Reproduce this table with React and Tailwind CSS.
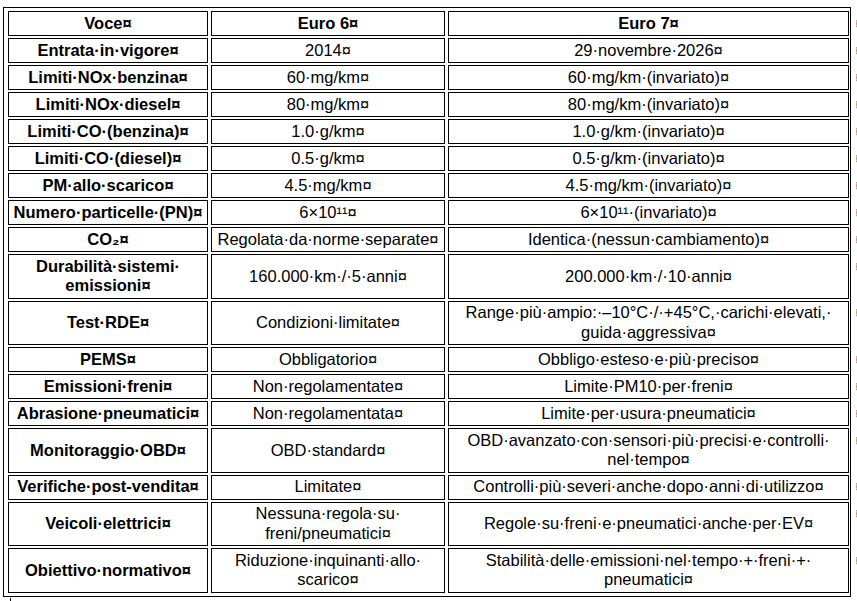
import React from "react";

const rows = [
  [["Voce"], ["Euro\u00a06"], ["Euro\u00a07"]],
  [["Entrata in vigore"], ["2014"], ["29 novembre 2026"]],
  [["Limiti NOx benzina"], ["60 mg/km"], ["60 mg/km (invariato)"]],
  [["Limiti NOx diesel"], ["80 mg/km"], ["80 mg/km (invariato)"]],
  [["Limiti CO (benzina)"], ["1.0 g/km"], ["1.0 g/km (invariato)"]],
  [["Limiti CO (diesel)"], ["0.5 g/km"], ["0.5 g/km (invariato)"]],
  [["PM allo scarico"], ["4.5 mg/km"], ["4.5 mg/km (invariato)"]],
  [["Numero particelle (PN)"], ["6×10¹¹"], ["6×10¹¹ (invariato)"]],
  [["CO₂"], ["Regolata da norme separate"], ["Identica (nessun cambiamento)"]],
  [["Durabilità sistemi ", "emissioni"], ["160.000 km / 5 anni"], ["200.000 km / 10 anni"]],
  [["Test RDE"], ["Condizioni limitate"], ["Range più ampio: –10°C / +45°C, carichi elevati, ", "guida aggressiva"]],
  [["PEMS"], ["Obbligatorio"], ["Obbligo esteso e più preciso"]],
  [["Emissioni freni"], ["Non regolamentate"], ["Limite PM10 per freni"]],
  [["Abrasione pneumatici"], ["Non regolamentata"], ["Limite per usura pneumatici"]],
  [["Monitoraggio OBD"], ["OBD standard"], ["OBD avanzato con sensori più precisi e controlli ", "nel tempo"]],
  [["Verifiche post-vendita"], ["Limitate"], ["Controlli più severi anche dopo anni di utilizzo"]],
  [["Veicoli elettrici"], ["Nessuna regola su ", "freni/pneumatici"], ["Regole su freni e pneumatici anche per EV"]],
  [["Obiettivo normativo"], ["Riduzione inquinanti allo ", "scarico"], ["Stabilità delle emissioni nel tempo + freni + ", "pneumatici"]],
];

const widths = ["w-[200px]", "w-[234px]", "w-[401px]"];

function Cell({ lines, bold, width }) {
  return (
    <div
      className={`${width} shrink-0 border border-black flex flex-col items-center justify-center text-center py-[1.75px] leading-[19.5px] ${bold ? "font-bold" : "font-normal"}`}
    >
      {lines.map((l, i) => (
        <div key={i} className="whitespace-nowrap">
          {l.replace(/ /g, "·")}
          {i === lines.length - 1 ? "¤" : ""}
        </div>
      ))}
    </div>
  );
}

export default function App() {
  return (
    <div
      className="w-[857px] h-[601px] overflow-hidden bg-white text-black text-[16.5px]"
      style={{ fontFamily: '"Liberation Sans", Arial, sans-serif' }}
    >
      <div className="mt-[7px] ml-[3px] w-[848px] border border-black pl-[4px] pt-[3px] pr-[1px] pb-[3px]">
        <div className="flex flex-col gap-[2px]">
          {rows.map((r, ri) => (
            <div key={ri} className="flex gap-[3px]">
              {r.map((c, ci) => (
                <Cell key={ci} lines={c} bold={ri === 0 || ci === 0} width={widths[ci]} />
              ))}
              <div className="shrink-0 self-start ml-[3px] pt-[2.75px] leading-[19.5px] text-[#8a8a8a]">¤</div>
            </div>
          ))}
        </div>
      </div>
      <div className="ml-[10px] mt-px w-px h-[8px] bg-black" />
    </div>
  );
}
